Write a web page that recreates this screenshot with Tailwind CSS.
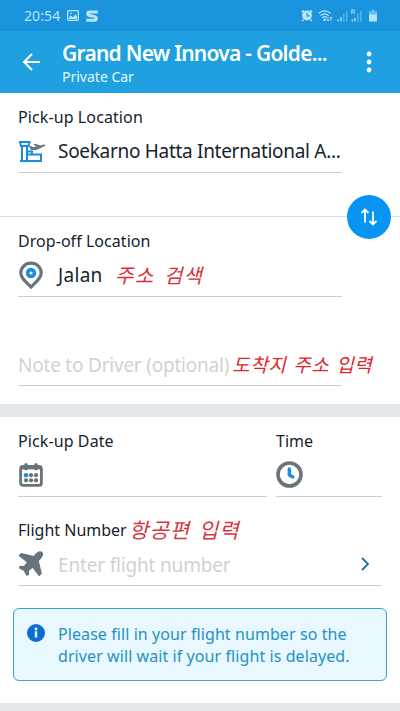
<!DOCTYPE html>
<html lang="en">
  <head>
    <meta charset="UTF-8" />
    <meta name="viewport" content="width=device-width, initial-scale=1.0" />
    <title>Private Car</title>
    <script src="https://cdn.jsdelivr.net/npm/@tailwindcss/browser@4"></script>
  </head>
  <body
    class="h-[711px] w-[400px] overflow-hidden bg-white font-['Noto_Sans','Noto_Sans_CJK_KR',sans-serif] whitespace-nowrap text-[#14232d]"
  >
    <!-- Status bar -->
    <div class="flex h-[31px] items-center bg-[#1994dc] pr-[23px] pl-6 text-[#b9e3f9]">
      <span class="w-[43px] text-[14px] leading-none tracking-[0.1px]">20:54</span>
      <svg class="h-[11px] w-[12px]" viewBox="0 0 12 11">
        <rect x=".7" y=".7" width="10.6" height="9.6" rx=".8" fill="none" stroke="currentColor" stroke-width="1.3" />
        <path d="M2 9V7.500l2-2 2 1.700 2.500-3L10 6.800V9Z" fill="currentColor" />
        <circle cx="4" cy="3.4" r=".9" fill="currentColor" />
      </svg>
      <svg class="ml-[7px] h-[12px] w-[12px]" viewBox="0 0 12 12" fill="none" stroke="currentColor" stroke-width="3">
        <path d="M11.800 2H3.200Q1.700 2 1.700 3.600T3.200 5.400l5.600 1.200q1.500.3 1.500 1.900T8.800 10.200H.2" />
      </svg>
      <div class="ml-auto flex items-center">
        <svg class="h-[13px] w-[12px]" viewBox="0 0 12 13">
          <circle cx="6" cy="6.5" r="4.9" fill="currentColor" />
          <path d="M.8 3.3 3 1.3M11.2 3.3 9 1.3M2.5 10.5 1.2 12M9.5 10.5l1.3 1.5" stroke="currentColor" stroke-width="1.6" />
          <path d="M6 3.7v3.2h2.6" fill="none" stroke="#1994dc" stroke-width="1.1" />
        </svg>
        <svg class="ml-[5px] h-[13px] w-[15px]" viewBox="0 0 15 13" fill="none" stroke="currentColor" stroke-width="1.2">
          <path d="M.6 4.3q6-5 12 0M2.4 6.600q4.200-3.600 8.400 0M4.300 8.700q2.300-2 4.600 0" />
          <circle cx="6.6" cy="10.8" r=".7" fill="currentColor" />
          <path d="M10 8v4M8.800 10.700l1.200 1.300 1.200-1.300M13 12V8M11.800 9.300 13 8l1.200 1.300" stroke-width=".9" />
        </svg>
        <svg class="ml-[4px] h-[13px] w-[11px]" viewBox="0 0 11 13" stroke="currentColor" stroke-width="1.3">
          <path d="M1 12.5v-2M3.9 12.5V8" />
          <path d="M6.8 12.5v-8M9.7 12.5V2" opacity=".45" />
        </svg>
        <svg class="ml-[3px] h-[13px] w-[11px]" viewBox="0 0 11 13" fill="none" stroke="currentColor" stroke-width="1.3">
          <path d="M1.2 12.5v-2M4 12.5V9" />
          <path d="M7 12.5V4.5M9.8 12.5V2" opacity=".45" />
          <path d="M.8 5V.6h1.700q1.200.1 1.200 1.100T2.500 2.900H.8M2.500 2.900 4 5" stroke-width=".9" />
        </svg>
        <svg class="ml-[7px] h-[13px] w-[8px]" viewBox="0 0 8 13">
          <path d="M2.300.8h3.400v1.400H8V6H0V2.200h2.300Z" fill="currentColor" opacity=".5" />
          <path d="M0 5.500h8v6q0 .9-.9.900H.9q-.9 0-.9-.9Z" fill="currentColor" />
        </svg>
      </div>
    </div>

    <!-- App bar -->
    <header class="flex h-[62px] items-center bg-[#1ea0e1] pr-[28px] pl-[22px] text-white">
      <svg class="h-[18px] w-[19px]" viewBox="0 0 19 18" fill="none" stroke="currentColor" stroke-width="2">
        <path d="M18 9H2M10 1 2 9l8 8" />
      </svg>
      <div class="ml-[21px]">
        <h1 class="h-[29px] pt-px text-[21px] leading-[29px] font-semibold tracking-[-0.75px]">
          Grand New Innova - Golde...
        </h1>
        <p class="h-[20px] text-[14px] leading-[20px] text-[#e8f7ff]">Private Car</p>
      </div>
      <svg class="ml-auto h-[22px] w-[6px]" viewBox="0 0 6 22" fill="currentColor">
        <circle cx="3" cy="3" r="2.4" />
        <circle cx="3" cy="11" r="2.4" />
        <circle cx="3" cy="19" r="2.4" />
      </svg>
    </header>

    <!-- Route -->
    <section class="relative h-[311px] pt-3">
      <div class="ml-[18px] w-[324px] border-b border-[#cdd0d1]">
        <div class="h-[24px] text-[16px] leading-[24px] tracking-[0.1px]">Pick-up Location</div>
        <div class="flex h-[43px] items-center">
          <svg class="h-[24px] w-[28px] shrink-0" viewBox="0 0 28 24" fill="none" stroke="#198fdb" stroke-width="2">
            <path d="M2 3h9.500l-1 4H3ZM4 7v15M9 7v15M2 22h21v-6.500H9M9.500 12.500H14v3" />
            <path d="M11 7.200l2-.2 2 1.300 3.200-.9-3-2.500 2-.2 5.200 1.800 3.300-.9q2-.1 1.600 1.100l-4.500 2.200-4.500 2.200-5.300.1Z" fill="#6a7479" stroke="none" />
          </svg>
          <span class="ml-[12px] pt-[2px] text-[19px] tracking-[-0.3px]">Soekarno Hatta International A...</span>
        </div>
      </div>
      <div class="mt-[43px] border-b border-[#dcdfe1]"></div>
      <!-- Swap button sits over the divider -->
      <button class="absolute top-[102px] left-[347px] flex h-[44px] w-[44px] items-center justify-center rounded-full bg-[#0894f3]">
        <svg class="h-[18px] w-[18px]" viewBox="0 0 18 18" fill="none" stroke="white" stroke-width="1.8">
          <path d="M5 14.500V2M1.500 5 5 1.500 8.500 5M13 3.500v13M9.500 13l3.500 3.500 3.500-3.500" />
        </svg>
      </button>
      <div class="mt-[12px] ml-[18px] w-[324px] border-b border-[#cdd0d1]">
        <div class="h-[24px] text-[16px] leading-[24px] tracking-[0.05px]">Drop-off Location</div>
        <div class="flex h-[43px] items-center">
          <svg class="h-[28px] w-[26px]" viewBox="0 0 26 28">
            <path d="M13 2.200C7 2.200 2.800 6.600 2.800 12c0 5.600 5.700 9.500 10.200 14 4.500-4.500 10.200-8.400 10.200-14C23.200 6.600 19 2.200 13 2.200Z" fill="none" stroke="#69747a" stroke-width="3.200" />
            <circle cx="13" cy="12" r="3.400" fill="white" stroke="#198fe4" stroke-width="3.600" />
          </svg>
          <span class="ml-[13px] w-[58px] pt-[2px] pl-px text-[19px] tracking-[0.3px]">Jalan</span>
          <span class="pt-[3px] text-[20px] tracking-[1.3px] text-[#d92f34] italic [word-spacing:3px]" lang="ko">주소 검색</span>
        </div>
      </div>
      <div class="mt-[48px] ml-[18px] flex h-[41px] w-[324px] items-center border-b border-[#cdd0d1]">
        <span class="w-[214px] shrink-0 text-[19px] tracking-[-0.22px] text-[#cfd2d2]">Note to Driver (optional)</span>
        <span class="text-[19px] tracking-[0.7px] text-[#e0252b] italic [word-spacing:1px]" lang="ko">도착지 주소 입력</span>
      </div>
    </section>

    <div class="h-[13px] bg-[#e5e8eb]"></div>

    <!-- Schedule and flight -->
    <section class="h-[286px] pt-3 pl-[18px]">
      <div class="flex gap-[9px]">
        <div class="w-[249px] border-b border-[#cdd0d1]">
          <div class="h-[24px] text-[16px] leading-[24px] tracking-[0.1px]">Pick-up Date</div>
          <div class="flex h-[43px] items-center pl-[1px]">
            <svg class="h-[24px] w-[24px]" viewBox="0 0 24 24">
              <rect x="1.600" y="3.500" width="20.800" height="18.900" rx="2.500" fill="none" stroke="#69747a" stroke-width="2.800" />
              <path d="M2 5h20" stroke="#69747a" stroke-width="2.800" />
              <path d="M7 1.700v4M17 1.700v4" stroke="#69747a" stroke-width="3.400" stroke-linecap="round" />
              <g fill="#69747a">
                <circle cx="12" cy="12.2" r="2.1" />
                <circle cx="17" cy="12.2" r="2.1" />
                <circle cx="7" cy="17.3" r="2.1" />
                <circle cx="12" cy="17.3" r="2.1" />
                <circle cx="17" cy="17.3" r="2.1" />
              </g>
              <circle cx="7" cy="12.2" r="2.3" fill="#198fdb" />
            </svg>
          </div>
        </div>
        <div class="w-[106px] border-b border-[#cdd0d1]">
          <div class="h-[24px] text-[16px] leading-[24px]">Time</div>
          <div class="flex h-[43px] items-center">
            <svg class="h-[27px] w-[27px]" viewBox="0 0 27 27" fill="none">
              <circle cx="13.5" cy="13.5" r="11.5" stroke="#69747a" stroke-width="3.6" />
              <path d="M13.300 8v6l3.500 2" stroke="#198fe4" stroke-width="3.400" stroke-linecap="round" stroke-linejoin="round" />
            </svg>
          </div>
        </div>
      </div>

      <div class="mt-[20px] w-[364px] border-b border-[#cdd0d1]">
        <div class="flex h-[26px] items-center">
          <span class="w-[111px] text-[16px]">Flight Number</span>
          <span class="text-[21px] leading-[26px] tracking-[1.1px] text-[#d4373d] italic [word-spacing:2px]" lang="ko">항공편 입력</span>
        </div>
        <div class="flex h-[42px] items-center">
          <svg class="h-[26px] w-[26px]" viewBox="0 0 26 26" fill="#69747a">
            <path d="M23.800 1.600c-1.200-1-3.200-.5-4.300.5L15.800 5.600 3.200 2.700 1.500 4.600l8.300 6.600-3.600 4.500-3.900-.3L1.600 17l4.700 2.500 2.600 4.700 1.500-.8-.2-3.900 4.500-3.600 6.400 8.300 2-1.700-3-12.600 3-3.500c1.100-1.200 1.800-3.700.7-4.800Z" stroke="#69747a" stroke-width="1.400" stroke-linejoin="round" />
          </svg>
          <span class="ml-[14px] pt-[2px] text-[19px] tracking-[-0.17px] text-[#cfd2d2]">Enter flight number</span>
          <svg class="mr-[12px] ml-auto h-[14px] w-[10px]" viewBox="0 0 10 14" fill="none" stroke="#1b74b0" stroke-width="1.8">
            <path d="m2 1 6 6-6 6" />
          </svg>
        </div>
      </div>

      <div class="mt-[22px] -ml-[5px] flex h-[73px] w-[374px] rounded-[6px] border border-[#3f9fc5] bg-[#e9f7fe] pt-[15px] pl-[13px] text-[#2492c4]">
        <svg class="h-[18px] w-[18px]" viewBox="0 0 18 18">
          <circle cx="9" cy="9" r="9" fill="#0c6fcf" />
          <path d="M9 7.300v6.200" stroke="#e9f7fe" stroke-width="2.400" />
          <circle cx="9" cy="5" r="1.4" fill="#e9f7fe" />
        </svg>
        <p class="-mt-px ml-[13px] text-[16px] leading-[22px] tracking-[0.08px]">
          Please fill in your flight number so the<br />
          driver will wait if your flight is delayed.
        </p>
      </div>
    </section>
    <div class="h-[9px] bg-[#e5e8eb]"></div>
  </body>
</html>
